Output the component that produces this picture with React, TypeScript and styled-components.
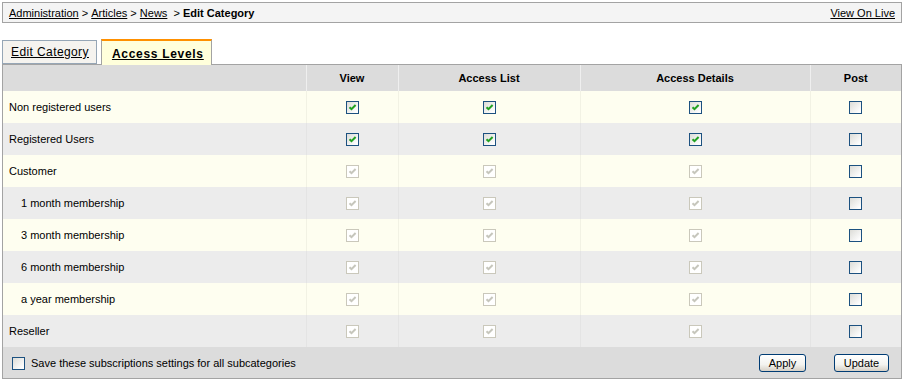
import React from "react";
import styled, { createGlobalStyle, css } from "styled-components";

const GlobalStyle = createGlobalStyle`
  *, *::before, *::after { box-sizing: border-box; }
  body {
    margin: 2px;
    font-family: "Liberation Sans", Arial, sans-serif;
    font-size: 11px;
    color: #000;
    background: #fff;
  }
`;

const Page = styled.div`
  width: 900px;
`;

const Breadcrumb = styled.div`
  display: flex;
  justify-content: space-between;
  align-items: center;
  height: 21px;
  padding: 0 6px;
  border: 1px solid #a3a3a3;
  background: #f4f4f4;
`;

const Crumbs = styled.div`
  display: flex;
  align-items: center;
  white-space: pre;
`;

const Link = styled.a`
  color: #000;
  text-decoration: underline;
  cursor: pointer;
`;

const Current = styled.b`
  font-weight: bold;
`;

const Tabs = styled.div`
  display: flex;
  align-items: flex-end;
  gap: 4px;
  margin-top: 16px;
  position: relative;
  z-index: 1;
`;

const Tab = styled.div<{ $active?: boolean }>`
  display: flex;
  align-items: center;
  border: 1px solid #96a6b6;
  text-decoration: underline;
  cursor: pointer;
  font-size: 12px;
  ${(p) =>
    p.$active
      ? css`
          height: 26px;
          border-color: #a3a3a3;
          border-top: 2px solid #ff9000;
          border-bottom: none;
          background: #ffffdb;
          font-weight: bold;
          letter-spacing: 0.7px;
          padding: 2px 7px 0 10px;
          margin-bottom: -1px;
        `
      : css`
          height: 24px;
          background: #f5f3ef;
          letter-spacing: 0.4px;
          padding: 0 7px 0 8px;
        `}
`;

const Panel = styled.div`
  border: 1px solid #a3a3a3;
`;

const Table = styled.table`
  width: 100%;
  border-collapse: collapse;
  table-layout: fixed;
`;

const HeadCell = styled.th`
  height: 26px;
  padding: 0;
  background: #dcdcdc;
  font-weight: bold;
  font-size: 11px;
  text-align: center;
  border-left: 1px solid #efefef;
  &:first-child {
    border-left: none;
  }
`;

const Row = styled.tr<{ $alt: boolean }>`
  height: 32px;
  background: ${(p) => (p.$alt ? "#ececec" : "#fefef0")};
  & > td {
    border-left: 1px solid ${(p) => (p.$alt ? "#e4e4e4" : "#f2f2e4")};
  }
  & > td:first-child {
    border-left: none;
  }
`;

const LabelCell = styled.td<{ $indent: boolean }>`
  padding: 0 0 0 ${(p) => (p.$indent ? 18 : 6)}px;
`;

const BoxCell = styled.td`
  padding: 0;
  text-align: center;
  vertical-align: middle;
`;

const Box = styled.span<{ $disabled?: boolean }>`
  display: inline-flex;
  align-items: center;
  justify-content: center;
  width: 13px;
  height: 13px;
  vertical-align: middle;
  border: 1px solid ${(p) => (p.$disabled ? "#cac8bb" : "#1c5180")};
  background: ${(p) =>
    p.$disabled ? "#fff" : "linear-gradient(135deg, #dcdcd7 0%, #fdfdfd 85%)"};
`;

const Footer = styled.div`
  display: flex;
  align-items: center;
  height: 31px;
  background: #dcdcdc;
  padding: 1px 12px 0 9px;
`;

const SaveLabel = styled.label`
  display: flex;
  align-items: center;
  gap: 6px;
  flex: 1;
`;

const Button = styled.button<{ $w: number }>`
  width: ${(p) => p.$w}px;
  height: 18px;
  padding: 0;
  margin-left: 28px;
  font-family: "Liberation Sans", Arial, sans-serif;
  font-size: 11px;
  color: #000;
  border: 1px solid #003c74;
  border-radius: 3px;
  background: linear-gradient(180deg, #ffffff 0%, #f3f3ef 60%, #d6d0c5 100%);
  cursor: pointer;
  &:first-of-type {
    margin-left: 0;
  }
`;

type State = "on" | "off" | "dis";

function Check({ state }: { state: State }) {
  return (
    <Box $disabled={state === "dis"}>
      {state !== "off" && (
        <svg width="9" height="9" viewBox="0 0 9 9">
          <path
            d="M1.5 4.2 L3.5 6.2 L7.6 2"
            fill="none"
            stroke={state === "dis" ? "#c6c6bc" : "#21a121"}
            strokeWidth="2"
          />
        </svg>
      )}
    </Box>
  );
}

const rows: { label: string; indent: boolean; states: State[] }[] = [
  { label: "Non registered users", indent: false, states: ["on", "on", "on", "off"] },
  { label: "Registered Users", indent: false, states: ["on", "on", "on", "off"] },
  { label: "Customer", indent: false, states: ["dis", "dis", "dis", "off"] },
  { label: "1 month membership", indent: true, states: ["dis", "dis", "dis", "off"] },
  { label: "3 month membership", indent: true, states: ["dis", "dis", "dis", "off"] },
  { label: "6 month membership", indent: true, states: ["dis", "dis", "dis", "off"] },
  { label: "a year membership", indent: true, states: ["dis", "dis", "dis", "off"] },
  { label: "Reseller", indent: false, states: ["dis", "dis", "dis", "off"] },
];

export default function App() {
  return (
    <Page>
      <GlobalStyle />
      <Breadcrumb>
        <Crumbs>
          <Link>Administration</Link>
          {" > "}
          <Link>Articles</Link>
          {" > "}
          <Link>News</Link>
          {"  > "}
          <Current>Edit Category</Current>
        </Crumbs>
        <Link>View On Live</Link>
      </Breadcrumb>
      <Tabs>
        <Tab>Edit Category</Tab>
        <Tab $active>Access Levels</Tab>
      </Tabs>
      <Panel>
        <Table>
          <colgroup>
            <col style={{ width: 303 }} />
            <col style={{ width: 92 }} />
            <col style={{ width: 182 }} />
            <col style={{ width: 230 }} />
            <col style={{ width: 91 }} />
          </colgroup>
          <thead>
            <tr>
              <HeadCell />
              <HeadCell>View</HeadCell>
              <HeadCell>Access List</HeadCell>
              <HeadCell>Access Details</HeadCell>
              <HeadCell>Post</HeadCell>
            </tr>
          </thead>
          <tbody>
            {rows.map((r, i) => (
              <Row key={r.label} $alt={i % 2 === 1}>
                <LabelCell $indent={r.indent}>{r.label}</LabelCell>
                {r.states.map((s, j) => (
                  <BoxCell key={j}>
                    <Check state={s} />
                  </BoxCell>
                ))}
              </Row>
            ))}
          </tbody>
        </Table>
        <Footer>
          <SaveLabel>
            <Check state="off" />
            Save these subscriptions settings for all subcategories
          </SaveLabel>
          <Button $w={47}>Apply</Button>
          <Button $w={55}>Update</Button>
        </Footer>
      </Panel>
    </Page>
  );
}
